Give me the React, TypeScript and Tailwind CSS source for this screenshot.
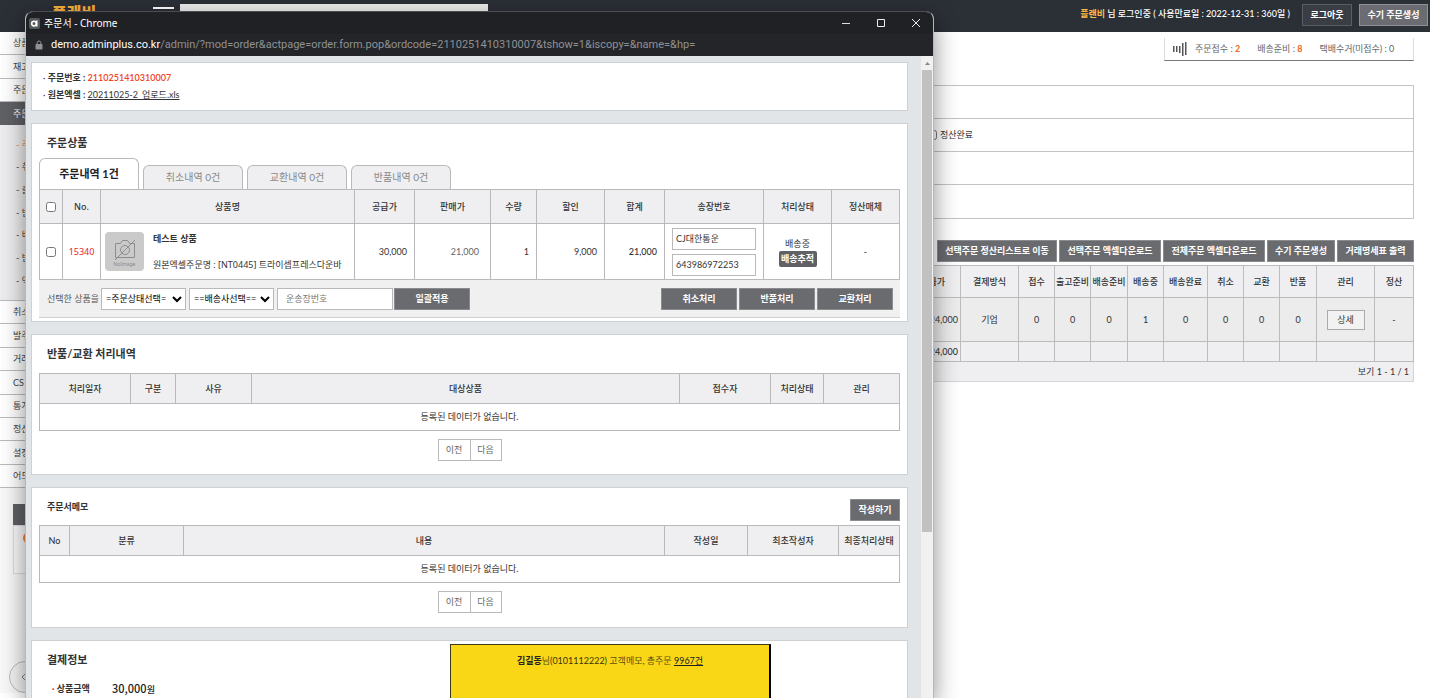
import type { ReactNode } from "react";
import { ChevronLeft } from "lucide-react";

const topMenus = ["상품", "재고", "주문"];
const subMenus = ["- 주", "- 취", "- 출", "- 반", "- 배", "- 반", "- 엑"];
const bottomMenus = ["취소", "발주", "거래", "CS", "통계", "정산", "설정", "어드"];

const listColumns = [
  { name: "결제방식", width: "w-[58px]", value: "기업" },
  { name: "접수", width: "w-[36px]", value: "0" },
  { name: "출고준비", width: "w-[36px]", value: "0" },
  { name: "배송준비", width: "w-[37px]", value: "0" },
  { name: "배송중", width: "w-[36px]", value: "1" },
  { name: "배송완료", width: "w-[44px]", value: "0" },
  { name: "취소", width: "w-[36px]", value: "0" },
  { name: "교환", width: "w-[36px]", value: "0" },
  { name: "반품", width: "w-[37px]", value: "0" },
  { name: "관리", width: "w-[58px]", value: "상세" },
  { name: "정산", width: "w-[39px]", value: "-" },
];

const claimColumns = [
  { name: "처리일자", width: "w-[91px]" },
  { name: "구분", width: "w-[45px]" },
  { name: "사유", width: "w-[76px]" },
  { name: "대상상품", width: "" },
  { name: "접수자", width: "w-[91px]" },
  { name: "처리상태", width: "w-[53px]" },
  { name: "관리", width: "w-[76px]" },
];

const memoColumns = [
  { name: "No", width: "w-[30px]" },
  { name: "분류", width: "w-[114px]" },
  { name: "내용", width: "" },
  { name: "작성일", width: "w-[83px]" },
  { name: "최초작성자", width: "w-[91px]" },
  { name: "최종처리상태", width: "w-[61px]" },
];

const DarkButton = ({
  children,
  className = "px-2",
}: {
  children: ReactNode;
  className?: string;
}) => (
  <button
    type="button"
    className={`h-[22px] whitespace-nowrap border border-[#8a8b8f] bg-[#6a6b6f] font-bold text-white ${className}`}
  >
    {children}
  </button>
);

const Panel = ({
  children,
  className = "",
}: {
  children: ReactNode;
  className?: string;
}) => (
  <section className={`border border-[#cdd1d4] bg-white px-[7px] ${className}`}>
    {children}
  </section>
);

const Pager = () => (
  <div className="mt-2 flex justify-center text-[#666]">
    <button type="button" className="h-[22px] w-[33px] border border-[#bbb]">
      이전
    </button>
    <button
      type="button"
      className="h-[22px] w-[31px] border border-l-0 border-[#bbb]"
    >
      다음
    </button>
  </div>
);

const EmptyTable = ({
  columns,
}: {
  columns: { name: string; width: string }[];
}) => (
  <table className="w-full table-fixed border-collapse text-center">
    <thead>
      <tr className="h-[30px] bg-[#efeff1]">
        {columns.map((col) => (
          <th
            key={col.name}
            className={`whitespace-nowrap border border-[#b9b9bb] font-medium ${col.width}`}
          >
            {col.name}
          </th>
        ))}
      </tr>
    </thead>
    <tbody>
      <tr className="h-[27px]">
        <td colSpan={columns.length} className="border border-[#b9b9bb]">
          등록된 데이터가 없습니다.
        </td>
      </tr>
    </tbody>
  </table>
);

const Header = () => (
  <header className="flex h-8 items-start bg-[#2b2f36] pr-[2px] text-white">
    <div className="pt-[5px] pl-[52px] text-[16px] leading-4 font-black text-[#fbb03b]">
      플랜비
    </div>
    <div className="mt-[7px] ml-[57px] h-[2px] w-[21px] bg-white" />
    <input
      aria-label="검색"
      className="mt-1 ml-[6px] h-5 w-[308px] bg-[#ebedec] px-2"
    />
    <p className="mt-[6px] ml-auto whitespace-nowrap leading-4 font-medium">
      <b className="text-[#fdbb45]">플랜비</b> 님 로그인중 ( 사용만료일 :
      2022-12-31 : 360일 )
    </p>
    <button
      type="button"
      className="mt-1 ml-3 h-[22px] w-[50px] border border-[#5a5d63] bg-[#3a3d44] font-bold"
    >
      로그아웃
    </button>
    <button
      type="button"
      className="mt-1 ml-[7px] h-[22px] w-[69px] border border-[#8f9196] bg-[#6a6c71] font-bold"
    >
      수기 주문생성
    </button>
  </header>
);

const Sidebar = () => (
  <aside className="w-[100px] shrink-0 bg-[#f8f8f8] text-[#444]">
    <nav>
      <ul className="flex h-[70px] flex-col bg-white">
        {topMenus.map((menu) => (
          <li
            key={menu}
            className="flex flex-1 items-center border-b border-[#bbb] pl-[13px]"
          >
            {menu}
          </li>
        ))}
      </ul>
      <div className="flex h-[23px] items-center bg-[#606165] pl-[13px] text-white">
        주문
      </div>
      <ul className="flex h-[175px] flex-col bg-[#ededef] py-2">
        {subMenus.map((menu, index) => (
          <li
            key={index}
            className={`flex flex-1 items-center pl-4 ${
              index === 0 ? "text-[#f5803e]" : ""
            }`}
          >
            {menu}
          </li>
        ))}
      </ul>
      <ul className="flex h-[188px] flex-col border-t border-[#bbb] bg-white">
        {bottomMenus.map((menu) => (
          <li
            key={menu}
            className="flex flex-1 items-center border-b border-[#bbb] pl-[13px]"
          >
            {menu}
          </li>
        ))}
      </ul>
    </nav>
    <div className="mt-4 ml-[13px] h-[21px] bg-[#606165]" />
    <div className="ml-[13px] h-[49px] border border-[#ddd] bg-[#fafafa] pt-[6px] pl-[9px]">
      <div className="h-3 w-3 rounded-full border-2 border-[#f5803e]" />
    </div>
    <button
      type="button"
      aria-label="메뉴 접기"
      className="mt-[87px] ml-[9px] flex h-8 w-8 items-center rounded-full border border-[#bbb] bg-[#f4f4f4] pl-[6px]"
    >
      <ChevronLeft className="h-4 w-4" strokeWidth={1} />
    </button>
  </aside>
);

const OrderList = () => (
  <main className="min-w-0 flex-1 pt-[6px] pr-4 pl-4">
    <div className="ml-auto flex h-[23px] w-[250px] items-center border-x border-b border-[#ddd] border-b-[#777] px-2 text-[#666]">
      <svg viewBox="0 0 14 14" className="h-[14px] w-[14px]" fill="#555">
        <path d="M0 4h1.5v6H0zM3 4h1.5v6H3zM6 4h1.5v7H6zM9 1h1.5v13H9zM12 0h1.5v13H12z" />
      </svg>
      <span className="ml-2">
        주문접수 : <b className="text-[#f26522]">2</b>
      </span>
      <span className="ml-[17px]">
        배송준비 : <b className="text-[#f26522]">8</b>
      </span>
      <span className="ml-[17px]">택배수거(미접수) : 0</span>
    </div>

    <div className="mt-6 divide-y divide-[#c4c4c4] border border-[#c4c4c4]">
      <div className="h-[33px]" />
      <div className="flex h-[33px] items-center justify-end">
        <label className="flex w-[486px] items-center gap-[3px]">
          <input type="checkbox" className="h-[10px] w-[10px]" />
          정산완료
        </label>
      </div>
      <div className="h-[33px]" />
      <div className="h-[33px]" />
    </div>

    <div className="mt-[21px] flex justify-end gap-[2px]">
      <DarkButton className="w-[120px]">선택주문 정산리스트로 이동</DarkButton>
      <DarkButton className="w-[102px]">선택주문 엑셀다운로드</DarkButton>
      <DarkButton className="w-[102px]">전체주문 엑셀다운로드</DarkButton>
      <DarkButton className="w-[68px]">수기 주문생성</DarkButton>
      <DarkButton className="w-[77px]">거래명세표 출력</DarkButton>
    </div>

    <table className="mt-[3px] w-full table-fixed border-collapse bg-[#efeff1] text-center">
      <thead>
        <tr className="h-[32px]">
          <th className="border border-[#bcbcbe] pr-[15px] text-right font-medium">
            공급가
          </th>
          {listColumns.map((col) => (
            <th
              key={col.name}
              className={`whitespace-nowrap border border-[#bcbcbe] font-medium ${col.width}`}
            >
              {col.name}
            </th>
          ))}
        </tr>
      </thead>
      <tbody>
        <tr className="h-[44px] bg-[#ececec]">
          <td className="border border-[#bcbcbe] pr-[2px] text-right">
            24,000
          </td>
          {listColumns.map((col) => (
            <td key={col.name} className="border border-[#bcbcbe]">
              {col.name === "관리" ? (
                <button
                  type="button"
                  className="h-5 w-[38px] border border-[#aaa] bg-[#f2f2f2]"
                >
                  {col.value}
                </button>
              ) : (
                col.value
              )}
            </td>
          ))}
        </tr>
        <tr className="h-[20px]">
          <td className="border border-[#bcbcbe] pr-[2px] text-right font-medium">
            24,000
          </td>
          {listColumns.map((col) => (
            <td key={col.name} className="border border-[#bcbcbe]" />
          ))}
        </tr>
        <tr className="h-[20px]">
          <td
            colSpan={listColumns.length + 1}
            className="border border-[#d4d4d6] pr-1 text-right"
          >
            보기 1 - 1 / 1
          </td>
        </tr>
      </tbody>
    </table>
  </main>
);

const WindowBar = () => (
  <div className="shrink-0 bg-[#202124] font-['Noto_Sans','Noto_Sans_CJK_KR',sans-serif] text-white">
    <div className="flex h-[22px] items-center pr-[12px] pl-[3px] text-[10px]">
      <svg viewBox="0 0 11 11" className="mr-1 h-[11px] w-[11px]">
        <rect width="11" height="11" rx="2" fill="#55585d" />
        <circle cx="5" cy="5.6" r="2.3" fill="none" stroke="#fff" strokeWidth="1.6" />
        <path d="M7.8 2.6v5.8" stroke="#fff" strokeWidth="1.5" />
      </svg>
      <span>주문서 - Chrome</span>
      <div className="ml-auto flex gap-[25px]">
        <button type="button" aria-label="최소화">
          <svg viewBox="0 0 10 10" className="h-[10px] w-[10px]" stroke="#ddd">
            <path d="M1 5.5h8" />
          </svg>
        </button>
        <button type="button" aria-label="최대화">
          <svg viewBox="0 0 10 10" className="h-[10px] w-[10px]" fill="none" stroke="#eee">
            <path d="M1.5 1.5h7v7h-7z" />
          </svg>
        </button>
        <button type="button" aria-label="닫기">
          <svg viewBox="0 0 10 10" className="h-[10px] w-[10px]" stroke="#eee">
            <path d="M1 1l8 8M9 1l-8 8" />
          </svg>
        </button>
      </div>
    </div>
    <div className="flex h-[22px] items-center bg-[#242529] pl-[9px] font-['Roboto',sans-serif] text-[11px] text-[#8e9195]">
      <svg viewBox="0 0 8 10" className="mr-2 h-[10px] w-2">
        <rect x="0.500" y="4" width="7" height="5.500" rx="0.800" fill="#8e9195" />
        <path d="M2.200 4.500V2.800a1.800 1.800 0 0 1 3.600 0v1.700" fill="none" stroke="#8e9195" />
      </svg>
      <span className="text-white">demo.adminplus.co.kr</span>
      /admin/?mod=order&actpage=order.form.pop&ordcode=2110251410310007&tshow=1&iscopy=&name=&hp=
    </div>
  </div>
);

const NoImage = () => (
  <div className="flex h-[39px] w-[39px] shrink-0 flex-col items-center justify-center rounded bg-[#cacaca] text-[5px] leading-[6px] text-[#888]">
    <svg viewBox="0 0 24 24" className="h-[24px] w-[24px]" fill="none" stroke="#8d8d8d">
      <path d="M2.500 6.500h5l2-3h5l2 3h5v14h-19z" />
      <circle cx="12" cy="13" r="4.500" />
      <path d="M2 23L22 3" />
    </svg>
    NoImage
  </div>
);

const th = "whitespace-nowrap border border-[#b9b9bb] font-medium";
const td = "border border-[#b9b9bb]";

const OrderItems = () => (
  <Panel className="pt-[11px] pb-[3px]">
    <h2 className="mb-[7px] pl-2 text-[11px] leading-4 font-bold">주문상품</h2>
    <div className="flex items-end gap-1 text-[10px] text-[#888]">
      <button
        type="button"
        className="h-[31px] w-[100px] rounded-t-md border border-b-0 border-[#b9b9bb] bg-white text-[11px] font-bold text-[#222]"
      >
        주문내역 1건
      </button>
      {["취소내역 0건", "교환내역 0건", "반품내역 0건"].map((tab) => (
        <button
          key={tab}
          type="button"
          className="h-[24px] w-[100px] rounded-t-md border border-b-0 border-[#b9b9bb] bg-[#efeff1]"
        >
          {tab}
        </button>
      ))}
    </div>
    <table className="w-full table-fixed border-collapse text-center">
      <thead>
        <tr className="h-[34px] bg-[#efeff1]">
          <th className={`${th} w-[23px]`}>
            <input type="checkbox" aria-label="전체선택" className="mx-auto block h-[10px] w-[10px]" />
          </th>
          <th className={`${th} w-[38px] font-['Noto_Sans']`}>No.</th>
          <th className={th}>상품명</th>
          <th className={`${th} w-[60px]`}>공급가</th>
          <th className={`${th} w-[76px]`}>판매가</th>
          <th className={`${th} w-[46px]`}>수량</th>
          <th className={`${th} w-[68px]`}>할인</th>
          <th className={`${th} w-[60px]`}>합계</th>
          <th className={`${th} w-[99px]`}>송장번호</th>
          <th className={`${th} w-[68px]`}>처리상태</th>
          <th className={`${th} w-[68px]`}>정산매체</th>
        </tr>
      </thead>
      <tbody>
        <tr className="h-[56px]">
          <td className={td}>
            <input type="checkbox" aria-label="15340 선택" className="mx-auto block h-[10px] w-[10px]" />
          </td>
          <td className={`${td} font-['Noto_Sans'] text-[#e8262a]`}>15340</td>
          <td className={`${td} pl-1`}>
            <div className="flex items-center gap-[9px] text-left font-['Noto_Sans','Noto_Sans_CJK_KR',sans-serif] whitespace-nowrap">
              <NoImage />
              <div className="leading-[13px]">
                <b>테스트 상품</b>
                <p className="mt-[13px]">
                  원본엑셀주문명 : [NT0445] 트라이셉프레스다운바
                </p>
              </div>
            </div>
          </td>
          <td className={`${td} pr-[7px] text-right`}>30,000</td>
          <td className={`${td} pr-[11px] text-right text-[#666]`}>21,000</td>
          <td className={`${td} pr-[7px] text-right`}>1</td>
          <td className={`${td} pr-[7px] text-right`}>9,000</td>
          <td className={`${td} pr-[7px] text-right font-medium`}>21,000</td>
          <td className={td}>
            <div className="flex flex-col gap-1 px-[7px]">
              <input
                aria-label="택배사"
                defaultValue="CJ대한통운"
                className="h-[22px] border border-[#b9b9bb] px-[3px]"
              />
              <input
                aria-label="송장번호"
                defaultValue="643986972253"
                className="h-[22px] border border-[#b9b9bb] px-[3px]"
              />
            </div>
          </td>
          <td className={td}>
            <p className="leading-[14px]">배송중</p>
            <button
              type="button"
              className="h-4 w-[38px] rounded-[2px] bg-[#606165] font-bold text-white"
            >
              배송추적
            </button>
          </td>
          <td className={td}>-</td>
        </tr>
      </tbody>
    </table>
    <div className="flex h-[38px] items-center border-b border-[#cfcfd1] bg-[#f0f0f1] pr-[7px] pl-2 text-[#555]">
      <span className="mr-[2px] whitespace-nowrap">선택한 상품을</span>
      <select aria-label="주문상태" className="mr-[3px] h-[22px] w-[85px] border border-[#b9b9bb] bg-white text-black">
        <option>=주문상태선택=</option>
      </select>
      <select aria-label="배송사" className="mr-[3px] h-[22px] w-[85px] border border-[#b9b9bb] bg-white text-black">
        <option>==배송사선택==</option>
      </select>
      <input
        aria-label="운송장번호"
        placeholder="운송장번호"
        className="mr-px h-[22px] w-[116px] border border-[#b9b9bb] bg-white px-2 placeholder:text-[#777]"
      />
      <DarkButton className="w-[76px]">일괄적용</DarkButton>
      <div className="ml-auto flex gap-[2px]">
        <DarkButton className="w-[76px]">취소처리</DarkButton>
        <DarkButton className="w-[76px]">반품처리</DarkButton>
        <DarkButton className="w-[76px]">교환처리</DarkButton>
      </div>
    </div>
  </Panel>
);

const Payment = () => (
  <Panel className="relative flex-1 pt-[11px]">
    <h2 className="pl-2 text-[11px] leading-4 font-bold">결제정보</h2>
    <dl className="mt-3 flex items-center pl-[13px] leading-4 font-bold">
      <dt className="w-[60px]">
        <span className="text-[#e8262a]">·</span> 상품금액
      </dt>
      <dd className="font-['Noto_Sans_CJK_KR',sans-serif] font-medium text-[#222]">
        <span className="text-[11px]">30,000</span>원
      </dd>
    </dl>
    {/* customer memo note floats over the payment panel */}
    <div className="absolute top-[3px] -bottom-10 left-[418px] w-[321px] border border-r-2 border-[#3c3a1c] border-r-black bg-[#f9d716] pt-2 text-center leading-4 text-[#5c5010]">
      <b className="text-[#222]">김길동</b>님
      <span className="text-[#3a3510]">(0101112222)</span> 고객메모, 총주문{" "}
      <a href="#orders" className="text-[#222] underline">
        9967건
      </a>
    </div>
  </Panel>
);

const OrderPopup = () => (
  <div className="absolute top-[11px] bottom-0 left-[25px] flex w-[909px] flex-col overflow-hidden rounded-t-lg border-x border-t border-[#4b4d50] border-x-[#b5b7b9] bg-[#e2e5e7]">
    <WindowBar />
    <div className="flex min-h-0 flex-1">
      <div className="flex min-w-0 flex-1 flex-col gap-3 overflow-hidden pt-[6px] pr-[13px] pl-[5px]">
        <Panel className="pt-[6px] pb-[7px] leading-[17px]">
          <p className="pl-1">
            · <b>주문번호 :</b>{" "}
            <b className="font-semibold text-[#f0401c]">2110251410310007</b>
          </p>
          <p className="pl-1">
            · <b>원본엑셀 :</b>{" "}
            <a href="#excel" className="underline">
              20211025-2_업로드.xls
            </a>
          </p>
        </Panel>
        <OrderItems />
        <Panel className="pt-[11px] pb-[13px]">
          <h2 className="mb-[11px] pl-2 text-[11px] leading-4 font-bold">
            반품/교환 처리내역
          </h2>
          <EmptyTable columns={claimColumns} />
          <Pager />
        </Panel>
        <Panel className="pt-[11px] pb-[14px]">
          <div className="mb-1 flex items-start justify-between">
            <h2 className="pl-2 leading-4 font-bold">주문서메모</h2>
            <DarkButton className="w-[50px]">작성하기</DarkButton>
          </div>
          <EmptyTable columns={memoColumns} />
          <Pager />
        </Panel>
        <Payment />
      </div>
      <div className="flex w-[12px] shrink-0 flex-col items-center bg-[#f1f1f1]">
        <svg viewBox="0 0 11 14" className="h-[14px] w-[11px]" fill="#888">
          <path d="M3 9l2.500-3L8 9z" />
        </svg>
        <div className="h-[72%] w-[10px] bg-[#c1c1c1]" />
      </div>
    </div>
  </div>
);

export default function App() {
  return (
    <div className="relative min-h-screen overflow-hidden bg-white font-['Lato','Noto_Sans_CJK_KR',sans-serif] text-[9px] text-[#333]">
      <Header />
      <div className="flex">
        <Sidebar />
        <OrderList />
      </div>
      <div className="absolute top-[11px] bottom-0 left-[25px] w-[909px] rounded-t-lg shadow-[0_8px_24px_rgba(0,0,0,0.45)]" />
      <OrderPopup />
    </div>
  );
}
